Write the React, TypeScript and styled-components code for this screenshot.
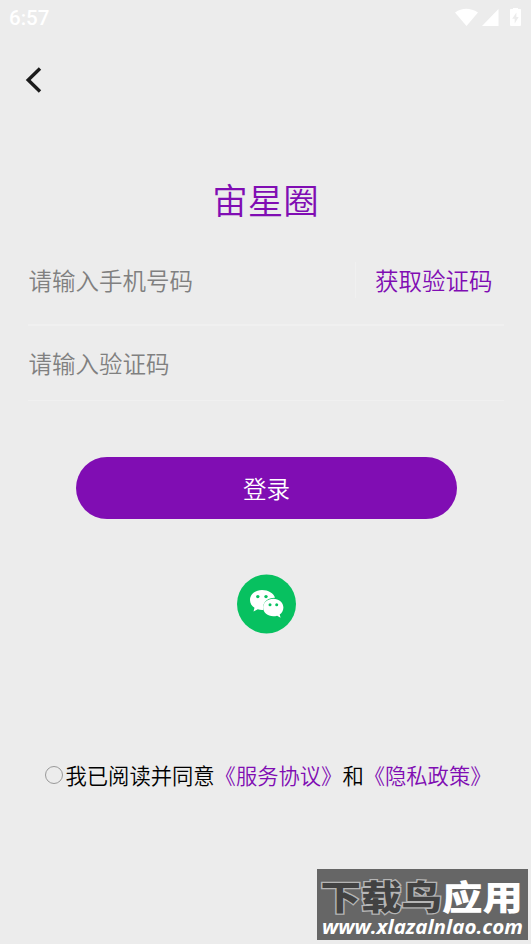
import React from "react";
import styled, { createGlobalStyle } from "styled-components";

const purple = "#800db3";

const GlobalStyle = createGlobalStyle`
  * { box-sizing: border-box; }
  body {
    margin: 0;
    background: #ececec;
    font-family: "Noto Sans CJK SC", "Noto Sans", sans-serif;
    font-weight: 350;
  }
  button { font-family: inherit; font-weight: inherit; border: 0; padding: 0; background: none; }
`;

const Screen = styled.main`
  width: 531px;
  height: 944px;
  display: flex;
  flex-direction: column;
  position: relative;
  overflow: hidden;
  background: #ececec;
`;

const StatusBar = styled.header`
  height: 36px;
  padding: 0 9px;
  display: flex;
  align-items: center;
  justify-content: space-between;
  color: #fff;
`;

const Clock = styled.span`
  font: 500 20.5px/36px Roboto, sans-serif;
`;

const StatusIcons = styled.svg`
  width: 68px;
  height: 20px;
`;

const NavBar = styled.nav`
  height: 88px;
  padding-left: 25px;
  display: flex;
  align-items: center;
`;

const BackButton = styled.button`
  width: 18px;
  height: 28px;
  svg { display: block; }
`;

const Title = styled.h1`
  margin: 51px 0 0;
  height: 48px;
  font-size: 35.5px;
  line-height: 48px;
  font-weight: 350;
  text-align: center;
  color: ${purple};
`;

const Form = styled.form`
  width: 476px;
  margin: 13px 0 0 28px;
`;

const Field = styled.div<{ $height: number; $line: number }>`
  height: ${(p) => p.$height}px;
  padding-bottom: ${(p) => p.$line - 1}px;
  display: flex;
  align-items: center;
  border-bottom: ${(p) => p.$line}px solid #f0f0f0;
`;

const Input = styled.input`
  flex: 1;
  min-width: 0;
  height: 36px;
  padding: 0 0 0 0.5px;
  border: 0;
  outline: 0;
  background: transparent;
  font: 350 23.5px/36px "Noto Sans CJK SC", sans-serif;
  &::placeholder { color: #808080; opacity: 1; }
`;

const CodeButton = styled.button`
  width: 149px;
  height: 36px;
  padding-left: 19px;
  border-left: 1px solid #f0f0f0;
  text-align: left;
  font-size: 23.5px;
  line-height: 36px;
  color: ${purple};
`;

const LoginButton = styled.button`
  width: 381px;
  height: 62px;
  margin: 56px 0 0 76px;
  border-radius: 31px;
  background: ${purple};
  color: #fff;
  font-size: 23.5px;
  line-height: 62px;
`;

const WechatButton = styled.button`
  width: 60px;
  height: 60px;
  margin: 55px 0 0 236px;
  svg { display: block; }
`;

const Agreement = styled.label`
  height: 32px;
  margin: 125px 0 0 45px;
  display: flex;
  align-items: center;
  font-size: 21.3px;
  line-height: 32px;
  color: #000;
  white-space: nowrap;
`;

const Radio = styled.span`
  width: 18px;
  height: 18px;
  margin: 0 2.5px 0 0;
  border: 1px solid #999;
  border-radius: 50%;
`;

const DocLink = styled.a`
  color: ${purple};
`;

const Watermark = styled.aside`
  position: absolute;
  left: 317px;
  top: 869px;
  width: 211px;
  height: 71px;
  padding-top: 8px;
  background: #666;
  color: #fff;
  white-space: nowrap;
`;

const SiteName = styled.div`
  display: flex;
  height: 38px;
  padding-left: 3px;
  font-size: 34px;
  line-height: 38px;
  font-weight: 900;
  transform: scaleX(1.19);
  transform-origin: left;
`;

const SiteDark = styled.span`
  color: #424242;
  -webkit-text-stroke: 2.5px #b5b5b5;
  paint-order: stroke fill;
`;

const SiteUrl = styled.div`
  width: max-content;
  margin-left: 5px;
  font: italic 700 20px/24px "Open Sans", sans-serif;
  transform: scaleX(1.03);
  transform-origin: left;
`;

export default function App() {
  return (
    <Screen>
      <GlobalStyle />
      <StatusBar>
        <Clock>6:57</Clock>
        <StatusIcons viewBox="0 0 68 20" fill="#fff">
          <path d="M1 4.500Q12 -3 24 4.500L12.500 18Z" />
          <path d="M44.500 1V18H28Z" />
          <path
            fillRule="evenodd"
            d="M59 0h5v1h2.200q.8 0 .8.8V17q0 1-1 1h-9q-1 0-1-1V1.800q0-.8.8-.8H59ZM62.400 4.500l-4.200 6.300h2.500v4.600l4-6.400h-2.300Z"
          />
        </StatusIcons>
      </StatusBar>
      <NavBar>
        <BackButton aria-label="返回">
          <svg width="18" height="28" viewBox="0 0 18 28">
            <path d="M15 2.500 3.200 14 15 25.500" fill="none" stroke="#1b1b1b" strokeWidth="3.400" />
          </svg>
        </BackButton>
      </NavBar>
      <Title>宙星圈</Title>
      <Form>
        <Field $height={90} $line={2}>
          <Input placeholder="请输入手机号码" />
          <CodeButton type="button">获取验证码</CodeButton>
        </Field>
        <Field $height={75} $line={1}>
          <Input placeholder="请输入验证码" />
        </Field>
      </Form>
      <LoginButton>登录</LoginButton>
      <WechatButton aria-label="微信登录">
        <svg width="60" height="60" viewBox="0 0 60 60">
          <circle cx="30.500" cy="30" r="29.500" fill="#07c160" />
          <path d="M26 16c-6.700 0-12 4.400-12 10 0 3.200 1.700 6 4.500 7.800L17.500 37.500l4.300-2.200q2 .6 4.200.6h1.300c-1.500-7.300 4.400-12.400 11.700-12.200C37.600 19.200 32.300 16 26 16Z" fill="#fff" />
          <path d="M37.300 24.800c-5.700 0-10.200 3.900-10.200 8.700s4.500 8.800 10.200 8.800q2 0 3.800-.6L44.600 43.700l-.9-3.200c2.300-1.600 3.700-4.100 3.700-7 0-4.800-4.500-8.700-10.100-8.700Z" fill="#fff" />
          <g fill="#07c160">
            <circle cx="21.800" cy="22.600" r="1.700" />
            <circle cx="30" cy="22.600" r="1.700" />
            <circle cx="34" cy="30.700" r="1.500" />
            <circle cx="40.700" cy="30.700" r="1.500" />
          </g>
        </svg>
      </WechatButton>
      <Agreement>
        <Radio />
        <span>我已阅读并同意</span>
        <DocLink>《服务协议》</DocLink>
        <span>和</span>
        <DocLink>《隐私政策》</DocLink>
      </Agreement>
      <Watermark>
        <SiteName>
          <SiteDark>下载鸟</SiteDark>
          <span>应用</span>
        </SiteName>
        <SiteUrl>www.xlazalnlao.com</SiteUrl>
      </Watermark>
    </Screen>
  );
}
